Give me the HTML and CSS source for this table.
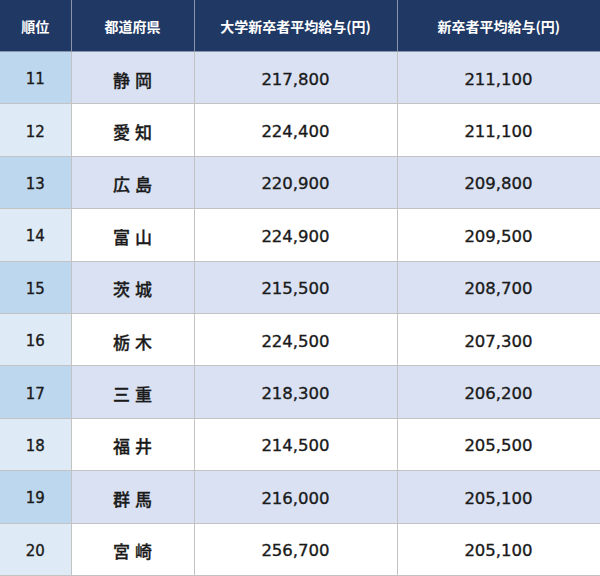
FILE: index.html
```html
<!DOCTYPE html>
<html lang="ja">
<head>
<meta charset="utf-8">
<link rel="stylesheet" href="styles.css">
</head>
<body>
<table class="rank">
  <colgroup>
    <col class="c1"><col class="c2"><col class="c3"><col class="c4">
  </colgroup>
  <thead>
    <tr><th>順位</th><th>都道府県</th><th>大学新卒者平均給与(円)</th><th>新卒者平均給与(円)</th></tr>
  </thead>
  <tbody>
    <tr class="odd"><td class="no">11</td><td class="pref">静岡</td><td class="num">217,800</td><td class="num">211,100</td></tr>
    <tr class="even"><td class="no">12</td><td class="pref">愛知</td><td class="num">224,400</td><td class="num">211,100</td></tr>
    <tr class="odd"><td class="no">13</td><td class="pref">広島</td><td class="num">220,900</td><td class="num">209,800</td></tr>
    <tr class="even"><td class="no">14</td><td class="pref">富山</td><td class="num">224,900</td><td class="num">209,500</td></tr>
    <tr class="odd"><td class="no">15</td><td class="pref">茨城</td><td class="num">215,500</td><td class="num">208,700</td></tr>
    <tr class="even"><td class="no">16</td><td class="pref">栃木</td><td class="num">224,500</td><td class="num">207,300</td></tr>
    <tr class="odd"><td class="no">17</td><td class="pref">三重</td><td class="num">218,300</td><td class="num">206,200</td></tr>
    <tr class="even"><td class="no">18</td><td class="pref">福井</td><td class="num">214,500</td><td class="num">205,500</td></tr>
    <tr class="odd"><td class="no">19</td><td class="pref">群馬</td><td class="num">216,000</td><td class="num">205,100</td></tr>
    <tr class="even"><td class="no">20</td><td class="pref">宮崎</td><td class="num">256,700</td><td class="num">205,100</td></tr>
  </tbody>
</table>
</body>
</html>
```

FILE: styles.css
```css
html, body {
  margin: 0;
  padding: 0;
  background: #ffffff;
}
.rank {
  width: 600px;
  border-collapse: collapse;
  table-layout: fixed;
  font-family: "Noto Sans CJK JP", "Noto Sans", sans-serif;
  color: #1a1a1a;
}
.c1 { width: 71px; }
.c2 { width: 123px; }
.c3 { width: 203px; }
.c4 { width: 203px; }
.rank th {
  height: 51px;
  padding: 0;
  background: #203864;
  color: #ffffff;
  font-size: 14px;
  font-weight: 700;
  text-align: center;
  border-left: 1px solid #8a94aa;
  border-bottom: 1px solid #8a94aa;
}
.rank th:first-child { border-left: none; }
.rank td {
  height: 48.4px;
  padding: 3px 0 0;
  text-align: center;
  border: 1px solid #c3c3c3;
}
.rank td:first-child { border-left: none; }
.rank tr.odd td { background: #d9e1f2; }
.rank tr.odd td.no { background: #bdd7ee; }
.rank tr.even td { background: #ffffff; }
.rank tr.even td.no { background: #deebf7; }
.no {
  font-family: "DejaVu Sans", "Noto Sans CJK JP", sans-serif;
  font-size: 15px;
  -webkit-text-stroke: 0.35px #1a1a1a;
}
.pref {
  font-size: 17px;
  font-weight: 500;
  letter-spacing: 5px;
  text-indent: 5px;
  -webkit-text-stroke: 0.3px #1a1a1a;
}
.num {
  font-family: "DejaVu Sans", "Noto Sans CJK JP", sans-serif;
  font-size: 16.5px;
  -webkit-text-stroke: 0.35px #1a1a1a;
}
```
